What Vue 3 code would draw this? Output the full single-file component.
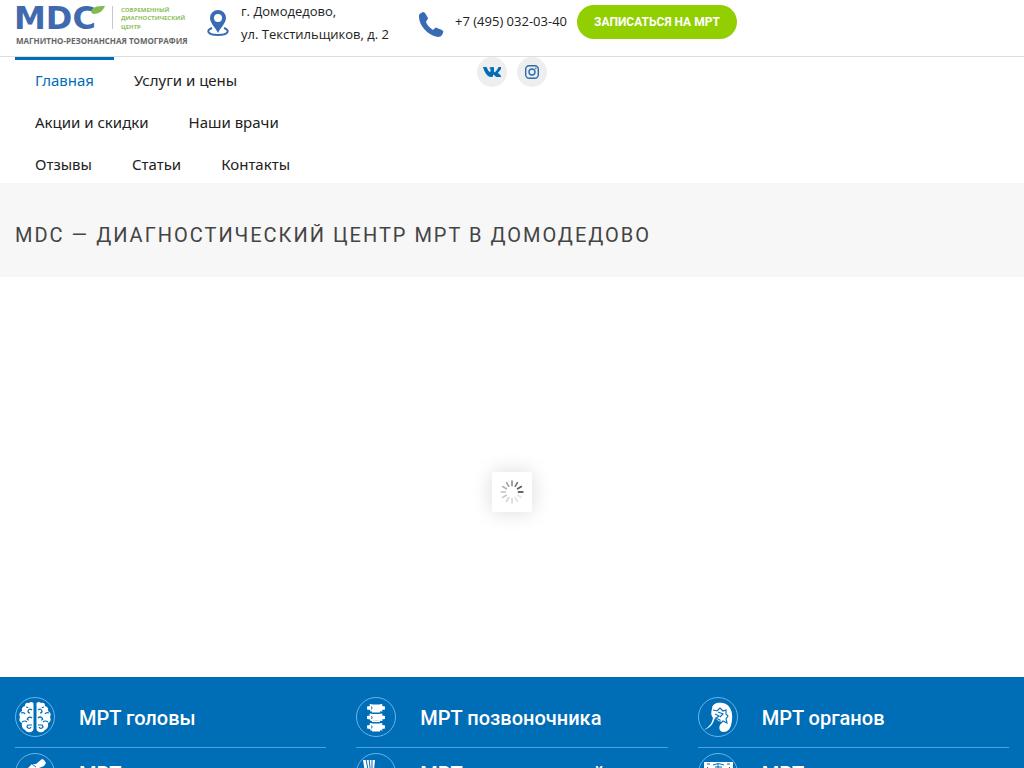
<script setup>
const menu = [
  { label: 'Главная', active: true },
  { label: 'Услуги и цены' },
  { label: 'Акции и скидки' },
  { label: 'Наши врачи' },
  { label: 'Отзывы' },
  { label: 'Статьи' },
  { label: 'Контакты' },
]

const services = [
  { icon: 'brain', label: 'МРТ головы' },
  { icon: 'spine', label: 'МРТ позвоночника' },
  { icon: 'organs', label: 'МРТ органов' },
  { icon: 'joint', label: 'МРТ суставов' },
  { icon: 'tissue', label: 'МРТ мягких тканей' },
  { icon: 'pelvis', label: 'МРТ малого таза' },
]

const spokes = [1, 0.12, 0.14, 0.18, 0.22, 0.26, 0.3, 0.36, 0.44, 0.54, 0.66, 0.8]
</script>

<template>
  <div class="page">
    <header>
      <div class="topbar">
        <a class="logo" href="#" aria-label="MDC">
          <svg width="172" height="48" viewBox="0 0 172 48">
            <text class="logo-name" x="-1" y="29">MDC</text>
            <path d="M76 12c1-5 5-6 14-6-2 5-6 8-12 8z" fill="#80bd4a" />
            <path d="M97.500 6v23" stroke="#c3c9cc" />
            <g class="logo-side">
              <text x="106" y="12">СОВРЕМЕННЫЙ</text>
              <text x="106" y="20">ДИАГНОСТИЧЕСКИЙ</text>
              <text x="106" y="29">ЦЕНТР</text>
            </g>
            <text class="logo-tag" x="1" y="44">МАГНИТНО-РЕЗОНАНСНАЯ ТОМОГРАФИЯ</text>
          </svg>
        </a>
        <address class="contact">
          <svg width="22" height="28" viewBox="0 0 22 28">
            <path d="M5 19c-6 2-5 7 6 7s12-5 6-7" fill="none" stroke="#396bb5" stroke-width="2" />
            <path fill="#396bb5" fill-rule="evenodd" d="M11 1a8 8 0 0 1 8 8c0 5-5 9-8 15C8 18 3 14 3 9a8 8 0 0 1 8-8zm0 4a4 4 0 1 0 0 8 4 4 0 0 0 0-8z" />
          </svg>
          <span>г. Домодедово,<br />ул. Текстильщиков, д. 2</span>
        </address>
        <a class="contact phone" href="tel:+74950320340">
          <svg width="26" height="26" viewBox="0 0 26 26">
            <path fill="#396bb5" d="M1 4Q2 2 5 1q1 0 2 1l3 5q0 1-1 2l-1 2c1 3 4 6 7 8l2-2q1-1 2 0l5 2q2 1 1 3l-1 2q-1 2-4 2C9 24 1 14 1 6z" />
          </svg>
          <span>+7 (495) 032-03-40</span>
        </a>
        <button class="book" type="button">ЗАПИСАТЬСЯ НА МРТ</button>
      </div>
      <div class="columns">
        <nav class="menu">
          <a v-for="item in menu" :key="item.label" href="#" :class="{ active: item.active }">{{ item.label }}</a>
        </nav>
        <div class="social">
          <a href="#" aria-label="ВКонтакте">
            <svg width="18" height="12" viewBox="0 0 18 12">
              <path fill="#006db7" d="M0 1h3q1 0 1 1 1 3 3 4c1 0 1-4-1-4q1-1 4-1 1 0 1 1v4c1 1 3-2 4-4q0-1 1-1h2q1 0 0 2c-1 2-3 3-3 4 0 0 4 3 3 4h-4q-1 0-2-1c-1-1-2-2-2 0q0 1-1 1H8C4 11 1 5 0 1z" />
            </svg>
          </a>
          <a href="#" aria-label="Instagram">
            <svg width="14" height="14" viewBox="0 0 14 14" fill="none" stroke="#2a6da8" stroke-width="1.400">
              <rect x=".7" y=".7" width="12.600" height="12.600" rx="3.500" />
              <circle cx="7" cy="7" r="3" />
              <circle cx="10.800" cy="3.200" r=".8" fill="#2a6da8" stroke="none" />
            </svg>
          </a>
        </div>
      </div>
    </header>

    <section class="heading">
      <h1>MDC — ДИАГНОСТИЧЕСКИЙ ЦЕНТР МРТ В ДОМОДЕДОВО</h1>
    </section>

    <section class="slider">
      <div class="loader" role="status" aria-label="Загрузка">
        <svg width="24" height="24" viewBox="-12 -12 24 24" stroke="#333" stroke-width="1.700" stroke-linecap="round">
          <path v-for="(o, i) in spokes" :key="i" d="M6.500 0h4.300" :opacity="o" :transform="`rotate(${i * 30})`" />
        </svg>
      </div>
    </section>

    <section class="columns services">
      <div v-for="s in services" :key="s.label" class="cell">
        <a class="service" href="#">
          <svg width="40" height="40" viewBox="0 0 40 40" fill="#fff">
            <circle cx="20" cy="20" r="19.500" fill="none" stroke="#69b4e8" />
            <g v-if="s.icon === 'brain'">
              <path d="M18.500 6Q16 4 14 6q-4-1-4 3-4 1-3 5-4 2-2 6-2 4 2 6-1 5 3 7 2 3 6 2 3-1 2.500-5z" />
              <path d="M21.500 6Q24 4 26 6q4-1 4 3 4 1 3 5 4 2 2 6 2 4-2 6 1 5-3 7-2 3-6 2-3-1-2.500-5z" />
              <path fill="none" stroke="#006db7" stroke-width="1.200" d="M17 13q-3-2-4 1 0 2 2 2M6 16q3-1 4 1M17 21q-2-2-4 0t1 2M7 25q3-2 5 0M17 28h-4q-2 2 0 3t3-1M11 10q2 0 2 1M23 13q3-2 4 1 0 2-2 2M34 16q-3-1-4 1M23 21q2-2 4 0t-1 2M33 25q-3-2-5 0M23 28h4q2 2 0 3t-3-1M29 10q-2 0-2 1" />
            </g>
            <g v-else-if="s.icon === 'spine'">
              <g v-for="y in [7, 16.500, 26]" :key="y" :transform="`translate(0 ${y})`">
                <path d="M14 0q6 1 12 0 1 1 0 2l3 .5v3L26 6q0 1 1 1.500-7-1-13 0 1-1 0-1.500l-3-.5v-3l3-.5q-1-1 0-2z" />
                <path d="M16 7h8v1.500h-8z" />
                <path d="M15.500 2.500q1 1.500 0 3" fill="none" stroke="#006db7" />
              </g>
            </g>
            <g v-else-if="s.icon === 'organs'">
              <path d="M14 12C14 6 20 5 25 6c7 1 10 9 9 17-1 9-4 12-9 12-5-1-4-6-2-9l-6-5c-2 5-3 9-11 12 6-4 8-7 9-12q-3-4-1-9z" />
              <path fill="none" stroke="#006db7" stroke-width="1.100" d="m15 13 4 1 3-3 3 3 3-1v4l2 2-2 3 1 4-4-2-3 3v-4l-4-2 3-2-4-2m3-2 5 2-3 3" />
            </g>
            <g v-else-if="s.icon === 'joint'">
              <path d="m11 17 6-6h4l6-5 2 1 2 3-2 3-5 2-5 8-3 9-8-3z" />
              <path d="m17 11 4 3" stroke="#006db7" />
            </g>
            <g v-else-if="s.icon === 'tissue'">
              <path d="M7 7h12l-1 10 6 16h-9L9 20z" />
              <path d="m10 6 3 16m0-16 2 16m1-16v16" stroke="#006db7" />
            </g>
            <g v-else>
              <path d="M6 9h29v17q-7 6-14 6T6 26z" />
              <path fill="none" stroke="#006db7" d="M9 11h3m17 0h3M15 12q5-3 11 0m-9 2h7m-4-3v8M9 14l3 3m20-3-3 3" />
            </g>
          </svg>
          <span>{{ s.label }}</span>
        </a>
      </div>
    </section>
  </div>
</template>

<style>
body {
  margin: 0;
}
</style>

<style scoped>
.page {
  height: 100vh;
  overflow: hidden;
  background: #fff;
  color: #222;
  font-family: "Open Sans", "Noto Sans", sans-serif;
}
a {
  color: inherit;
  text-decoration: none;
}
svg {
  display: block;
  flex: none;
}
.topbar {
  display: flex;
  align-items: flex-start;
  height: 56px;
  padding: 0 15px;
  border-bottom: 1px solid #ddd;
}
.logo {
  margin-right: 20px;
}
.logo svg {
  overflow: visible;
}
.logo-name {
  font: bold 32px "DejaVu Sans", sans-serif;
  fill: #4169b0;
}
.logo-side {
  font: bold 6px "Open Sans", sans-serif;
  fill: #8dc05a;
}
.logo-tag {
  font: bold 8px "Open Sans", sans-serif;
  fill: #666;
}
.contact {
  display: flex;
  gap: 12px;
  font-size: 13px;
  font-style: normal;
  line-height: 23px;
}
.contact svg {
  margin-top: 9px;
}
.phone {
  margin-left: 29px;
  gap: 11px;
}
.phone svg {
  margin-top: 11px;
}
.phone span {
  margin-top: 10px;
}
.book {
  height: 34px;
  margin: 5px 0 0 10px;
  padding: 0 17px;
  border: 0;
  border-radius: 17px;
  background: #92cf00;
  color: #fff;
  font: bold 12px Roboto, sans-serif;
}
.columns {
  display: grid;
  grid-template-columns: repeat(3, 1fr);
}
.menu {
  display: flex;
  flex-wrap: wrap;
  padding: 0 15px;
}
.menu a {
  box-sizing: border-box;
  height: 42px;
  padding: 0 20px;
  border-top: 3px solid transparent;
  font-family: "Noto Sans", "Open Sans", sans-serif;
  font-size: 15px;
  line-height: 40px;
}
.menu .active {
  border-color: #006db7;
  color: #006db7;
}
.social {
  display: flex;
  justify-content: center;
  align-items: flex-start;
  gap: 10px;
}
.social a {
  display: grid;
  place-items: center;
  width: 30px;
  height: 30px;
  border-radius: 50%;
  background: #eee;
}
.heading {
  padding: 36px 15px 26px;
  background: #f7f7f7;
}
h1 {
  margin: 0;
  color: #444;
  font: 400 20px/32px Roboto, sans-serif;
  letter-spacing: 2px;
}
.slider {
  display: grid;
  place-items: center;
  height: 400px;
}
.loader {
  display: grid;
  place-items: center;
  width: 40px;
  height: 40px;
  margin-top: 29px;
  border-radius: 3px;
  background: #fff;
  box-shadow: 0 0 20px rgba(0, 0, 0, 0.15);
}
.services {
  padding-top: 20px;
  background: #006db7;
}
.cell {
  padding: 0 15px;
}
.service {
  display: flex;
  align-items: flex-start;
  gap: 24px;
  height: 50px;
  margin-bottom: 5px;
  border-bottom: 1px solid #4ba3dd;
  color: #fff;
  font: 500 20px/42px Roboto, sans-serif;
}
</style>
